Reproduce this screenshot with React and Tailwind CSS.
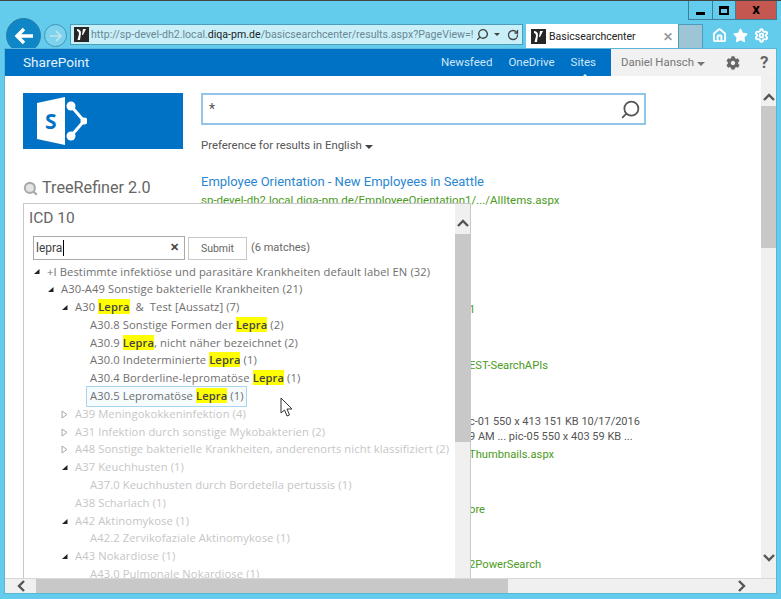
import React from 'react';
import { Home, Settings, RotateCw, Search } from 'lucide-react';
import { FaCog, FaStar } from 'react-icons/fa';

const Mark = ({ children }) => <span className="bg-[#ffff00] text-[#444] font-semibold">{children}</span>;

const Expanded = () => (
  <svg width="7" height="7" viewBox="0 0 7 7" className="shrink-0"><polygon points="6.5,1 6.5,6 1,6" fill="#222" /></svg>
);

const Collapsed = () => (
  <svg width="7" height="9" viewBox="0 0 7 9" className="shrink-0"><polygon points="1,1 6,4.5 1,8" fill="#fff" stroke="#aaa" /></svg>
);

const Favicon = () => (
  <svg width="15" height="15" viewBox="0 0 15 15" className="shrink-0">
    <rect width="15" height="15" fill="#262626" />
    <path d="M3 2 C5 2 7 3 7 6 L6 13 L3.5 13 L5 7 C5 5 4 4 3 4 Z" fill="#fff" />
    <path d="M9 2 L12 2 L9 8 L8 8 Z" fill="#fff" />
  </svg>
);

const Chevron = ({ d }) => (
  <svg width="12" height="12" viewBox="0 0 12 12" fill="none" stroke="#555" strokeWidth="2.4"><path d={d} /></svg>
);

const Row = ({ level, icon, dim, children }) => (
  <div className={`flex items-center h-[17.8px] whitespace-nowrap ${dim ? 'text-[#c6c6c6]' : 'text-[#6f6f6f]'}`}>
    <div className={`shrink-0 ${level === 0 ? 'w-[14px]' : level === 1 ? 'w-[28px]' : level === 2 ? 'w-[42px]' : 'w-[57px]'}`}>
      {icon && <div className={level === 0 ? 'pl-0' : level === 1 ? 'pl-[14px]' : 'pl-[28px]'}>{icon === 'open' ? <Expanded /> : <Collapsed />}</div>}
    </div>
    <span>{children}</span>
  </div>
);

export default function App() {
  return (
    <div className="relative w-[781px] h-[599px] overflow-hidden bg-[#63cbec] flex flex-col border-t border-[#444] font-['Roboto',sans-serif]">
      {/* window buttons */}
      <div className="h-[23px] flex justify-end pr-[4px] shrink-0">
        <div className="flex h-[19px] border border-t-0 border-[#3f7f95]">
          <div className="w-[24px] border-r border-[#3f7f95] flex items-end justify-center pb-[4px]"><div className="w-[9px] h-[3px] bg-black" /></div>
          <div className="w-[23px] border-r border-[#3f7f95] flex items-center justify-center"><div className="w-[10px] h-[9px] border-2 border-t-[3px] border-black" /></div>
          <div className="w-[40px] bg-[#c4574f] flex items-center justify-center text-[15px] font-bold leading-none text-black pb-[2px]">x</div>
        </div>
      </div>

      {/* browser toolbar */}
      <div className="h-[25px] flex shrink-0 pl-[6px]">
        <div className="w-[35px] h-[35px] rounded-full bg-[#0f86c6] border border-[#2b7fa8] flex items-center justify-center -mt-[6px] shrink-0">
          <svg width="20" height="18" viewBox="0 0 20 18" fill="none" stroke="#fff" strokeWidth="3.4"><path d="M10 2 L3 9 L10 16 M3 9 H19" /></svg>
        </div>
        <div className="ml-[3px] w-[23px] h-[23px] rounded-full border border-[#3f94b5] bg-[#7dd3ed] flex items-center justify-center shrink-0">
          <svg width="13" height="12" viewBox="0 0 13 12" fill="none" stroke="#c2e4ee" strokeWidth="1.6"><path d="M7 1 L12 6 L7 11 M12 6 H1" /></svg>
        </div>
        <div className="ml-[3px] w-[453px] h-[21px] bg-[#c9eff9] border border-[#4a9dbb] flex items-center pl-[3px] pr-[3px] shrink-0">
          <Favicon />
          <span className="ml-[2px] text-[10.6px] text-[#6a8793] whitespace-nowrap flex-1">http://sp-devel-dh2.local.<span className="text-[#222]">diqa-pm.de</span>/basicsearchcenter/results.aspx?PageView=!</span>
          <Search size={13} strokeWidth={2.6} className="text-[#444] -scale-x-100" />
          <span className="ml-[5px] w-0 h-0 border-x-[3px] border-x-transparent border-t-[3px] border-t-[#444]" />
          <RotateCw size={12} strokeWidth={2.6} className="text-[#444] ml-[7px]" />
        </div>
        <div className="ml-[3px] w-[152px] h-[25px] bg-white flex items-center pl-[5px] pr-[5px] shrink-0">
          <Favicon />
          <span className="ml-[3px] text-[10.5px] text-[#222] flex-1 whitespace-nowrap">Basicsearchcenter</span>
          <span className="text-[#999] text-[12px] font-bold leading-none">✕</span>
        </div>
        <div className="w-[25px] h-[25px] bg-[#9ec5d6] border border-b-0 border-[#4a9dbb] shrink-0" />
        <div className="flex items-center ml-[9px] gap-[6px] text-white pb-[2px]">
          <Home size={15} strokeWidth={3} />
          <FaStar size={15} />
          <Settings size={15} strokeWidth={3} />
        </div>
      </div>

      {/* page */}
      <div className="relative flex-1 mx-[5px] mb-[6px] bg-white flex flex-col min-h-0 shadow-[0_0_0_1px_#5bb5d6]">
        <div className="h-[27px] bg-[#0072c6] flex items-center text-white shrink-0">
          <span className="ml-[18px] text-[13.6px] flex-1 text-[#e6f2fa]">SharePoint</span>
          <div className="flex gap-[16px] text-[11.5px] text-[#cfe6f6] pr-[15px]">
            <span>Newsfeed</span>
            <span>OneDrive</span>
            <span className="relative">Sites<span className="absolute left-[11px] -bottom-[6px] w-0 h-0 border-x-[3px] border-x-transparent border-b-[3px] border-b-white" /></span>
          </div>
          <div className="w-[165px] h-full bg-[#f1f1f1] flex items-center pl-[10px] text-[#777] text-[11.4px]">
            <span>Daniel Hansch</span>
            <span className="ml-[3px] mt-[2px] w-0 h-0 border-x-[4px] border-x-transparent border-t-[4px] border-t-[#777]" />
            <FaCog size={14} className="ml-[21px] text-[#666]" />
            <span className="ml-[20px] text-[17px] font-bold text-[#666] leading-none">?</span>
          </div>
        </div>

        <div className="flex-1 flex min-h-0">
          <div className="relative flex-1 overflow-hidden flex pl-[18px] pt-[17px]">
            <div className="w-[160px] shrink-0">
              <div className="h-[56px] bg-[#0072c6] flex items-center pl-[14px]">
                <svg width="50" height="48" viewBox="0 0 50 48">
                  <polygon points="0,6 28,0 28,48 0,42" fill="#fff" />
                  <g stroke="#fff" strokeWidth="3" fill="none"><path d="M34 9 L47 24 L34 39" /></g>
                  <circle cx="34" cy="9" r="4.5" fill="#fff" />
                  <circle cx="47" cy="24" r="3.5" fill="#fff" />
                  <circle cx="34" cy="39" r="4.5" fill="#fff" />
                  <text x="8" y="32" fontSize="21" fontWeight="700" fill="#0072c6" fontFamily="Open Sans">S</text>
                </svg>
              </div>
              <div className="mt-[27px] flex items-center text-[16.2px] text-[#666]">
                <Search size={15} strokeWidth={3.4} className="text-[#aaa] fill-[#e4e4e4]" />
                <span className="ml-[4px]">TreeRefiner 2.0</span>
              </div>
            </div>

            <div className="ml-[18px] flex-1 min-w-0">
              <div className="w-[445px] h-[32px] border-2 border-[#92c5ea] flex items-center justify-between pl-[6px] pr-[3px] text-[14px] text-[#555]">
                <span>*</span>
                <Search size={21} strokeWidth={2} className="text-[#555] -scale-x-100" />
              </div>
              <div className="mt-[12px] text-[11.4px] text-[#555] flex items-center h-[18px]">
                Preference for results in English
                <span className="ml-[3px] mt-[2px] w-0 h-0 border-x-[4px] border-x-transparent border-t-[4px] border-t-[#444]" />
              </div>
              {/* results, mostly behind the refiner popup */}
              <div className="mt-[18px] text-[13px] text-[#2b86d1] whitespace-nowrap leading-[18px]">Employee Orientation - New Employees in Seattle</div>
              <div className="text-[11.5px] text-[#4b9b22] whitespace-nowrap leading-[18px]">sp-devel-dh2.local.diqa-pm.de/EmployeeOrientation1/.../AllItems.aspx</div>
              <div className="pl-[268px] text-[11.2px] text-[#4b9b22] whitespace-nowrap">
                <div className="mt-[92px] leading-[18px]">1</div>
                <div className="mt-[38px] leading-[18px]">EST-SearchAPIs</div>
                <div className="mt-[39px] leading-[15px] text-[#555] text-[11px]">c-01 550 x 413 151 KB 10/17/2016</div>
                <div className="leading-[15px] text-[#555] text-[11px]">9 AM ... pic-05 550 x 403 59 KB ...</div>
                <div className="mt-[2px] leading-[18px]">Thumbnails.aspx</div>
                <div className="mt-[37px] leading-[18px]">ore</div>
                <div className="mt-[37px] leading-[18px]">2PowerSearch</div>
              </div>
            </div>

            {/* tree refiner popup */}
            <div className="absolute left-[18px] top-[127px] w-[448px] bottom-0 bg-white border border-b-0 border-[#c8c8c8] flex overflow-hidden">
              <div className="flex-1 min-w-0 pl-[5px]">
                <div className="text-[15.5px] text-[#666] mt-[4px] leading-[20px]">ICD 10</div>
                <div className="mt-[8px] ml-[4px] flex items-center">
                  <div className="w-[152px] h-[24px] border border-[#aaa] flex items-center justify-between pl-[2px] pr-[5px] text-[12px] text-[#444]">
                    <span className="border-r border-black pr-[1px] leading-[16px]">lepra</span>
                    <span className="text-[11px] font-bold">✕</span>
                  </div>
                  <div className="ml-[3px] w-[59px] h-[23px] border border-[#c8c8c8] flex items-center justify-center text-[10.5px] text-[#666] pt-[1px]">Submit</div>
                  <span className="ml-[4px] text-[11px] text-[#666]">(6 matches)</span>
                </div>
                <div className="mt-[3px] ml-[4px] text-[11.2px] font-medium tracking-[0.1px] font-['Open_Sans',sans-serif]">
                  <Row level={0} icon="open">+I Bestimmte infektiöse und parasitäre Krankheiten default label EN (32)</Row>
                  <Row level={1} icon="open">A30-A49 Sonstige bakterielle Krankheiten (21)</Row>
                  <Row level={2} icon="open">A30 <Mark>Lepra</Mark> &nbsp;&amp;&nbsp; Test [Aussatz] (7)</Row>
                  <Row level={3}>A30.8 Sonstige Formen der <Mark>Lepra</Mark> (2)</Row>
                  <Row level={3}>A30.9 <Mark>Lepra</Mark>, nicht näher bezeichnet (2)</Row>
                  <Row level={3}>A30.0 Indeterminierte <Mark>Lepra</Mark> (1)</Row>
                  <Row level={3}>A30.4 Borderline-lepromatöse <Mark>Lepra</Mark> (1)</Row>
                  <Row level={3}><span className="-ml-[4px] px-[3px] py-[1px] border border-[#a8d6ef] bg-[#f5fbfe] inline-block w-[161px]">A30.5 Lepromatöse <Mark>Lepra</Mark> (1)</span></Row>
                  <Row level={2} icon="closed" dim>A39 Meningokokkeninfektion (4)</Row>
                  <Row level={2} icon="closed" dim>A31 Infektion durch sonstige Mykobakterien (2)</Row>
                  <Row level={2} icon="closed" dim>A48 Sonstige bakterielle Krankheiten, anderenorts nicht klassifiziert (2)</Row>
                  <Row level={2} icon="open" dim>A37 Keuchhusten (1)</Row>
                  <Row level={3} dim>A37.0 Keuchhusten durch Bordetella pertussis (1)</Row>
                  <Row level={2} dim>A38 Scharlach (1)</Row>
                  <Row level={2} icon="open" dim>A42 Aktinomykose (1)</Row>
                  <Row level={3} dim>A42.2 Zervikofaziale Aktinomykose (1)</Row>
                  <Row level={2} icon="open" dim>A43 Nokardiose (1)</Row>
                  <Row level={3} dim>A43.0 Pulmonale Nokardiose (1)</Row>
                </div>
              </div>
              {/* popup scrollbar */}
              <div className="w-[15px] bg-[#f0f0f0] flex flex-col shrink-0">
                <div className="h-[30px] flex items-end justify-center pb-[5px]"><Chevron d="M1 9 L6 4 L11 9" /></div>
                <div className="h-[208px] bg-[#c8c8c8]" />
              </div>
            </div>

            {/* mouse pointer */}
            <svg width="14" height="21" viewBox="0 0 14 21" className="absolute left-[275px] top-[321px]">
              <path d="M1 1 V16 L4.5 13 L7 19 L9.5 18 L7 12 L12 12 Z" fill="#fff" stroke="#333" strokeWidth="1" />
            </svg>
          </div>

          {/* page scrollbar */}
          <div className="w-[15px] bg-[#f0f0f0] flex flex-col justify-between shrink-0">
            <div>
              <div className="h-[30px] flex items-end justify-center pb-[3px]"><Chevron d="M1 9 L6 4 L11 9" /></div>
              <div className="h-[142px] bg-[#c8c8c8]" />
            </div>
            <div className="h-[30px] flex items-start justify-center pt-[4px]"><Chevron d="M1 3 L6 8 L11 3" /></div>
          </div>
        </div>

        {/* bottom scrollbar */}
        <div className="h-[15px] bg-[#f0f0f0] flex items-center shrink-0 border-t border-[#d8d8d8]">
          <div className="w-[31px] flex justify-center"><Chevron d="M9 1 L4 6 L9 11" /></div>
          <div className="w-[472px] h-full bg-[#c8c8c8]" />
          <div className="flex-1 flex justify-end pr-[28px]"><Chevron d="M3 1 L8 6 L3 11" /></div>
        </div>
      </div>
    </div>
  );
}
